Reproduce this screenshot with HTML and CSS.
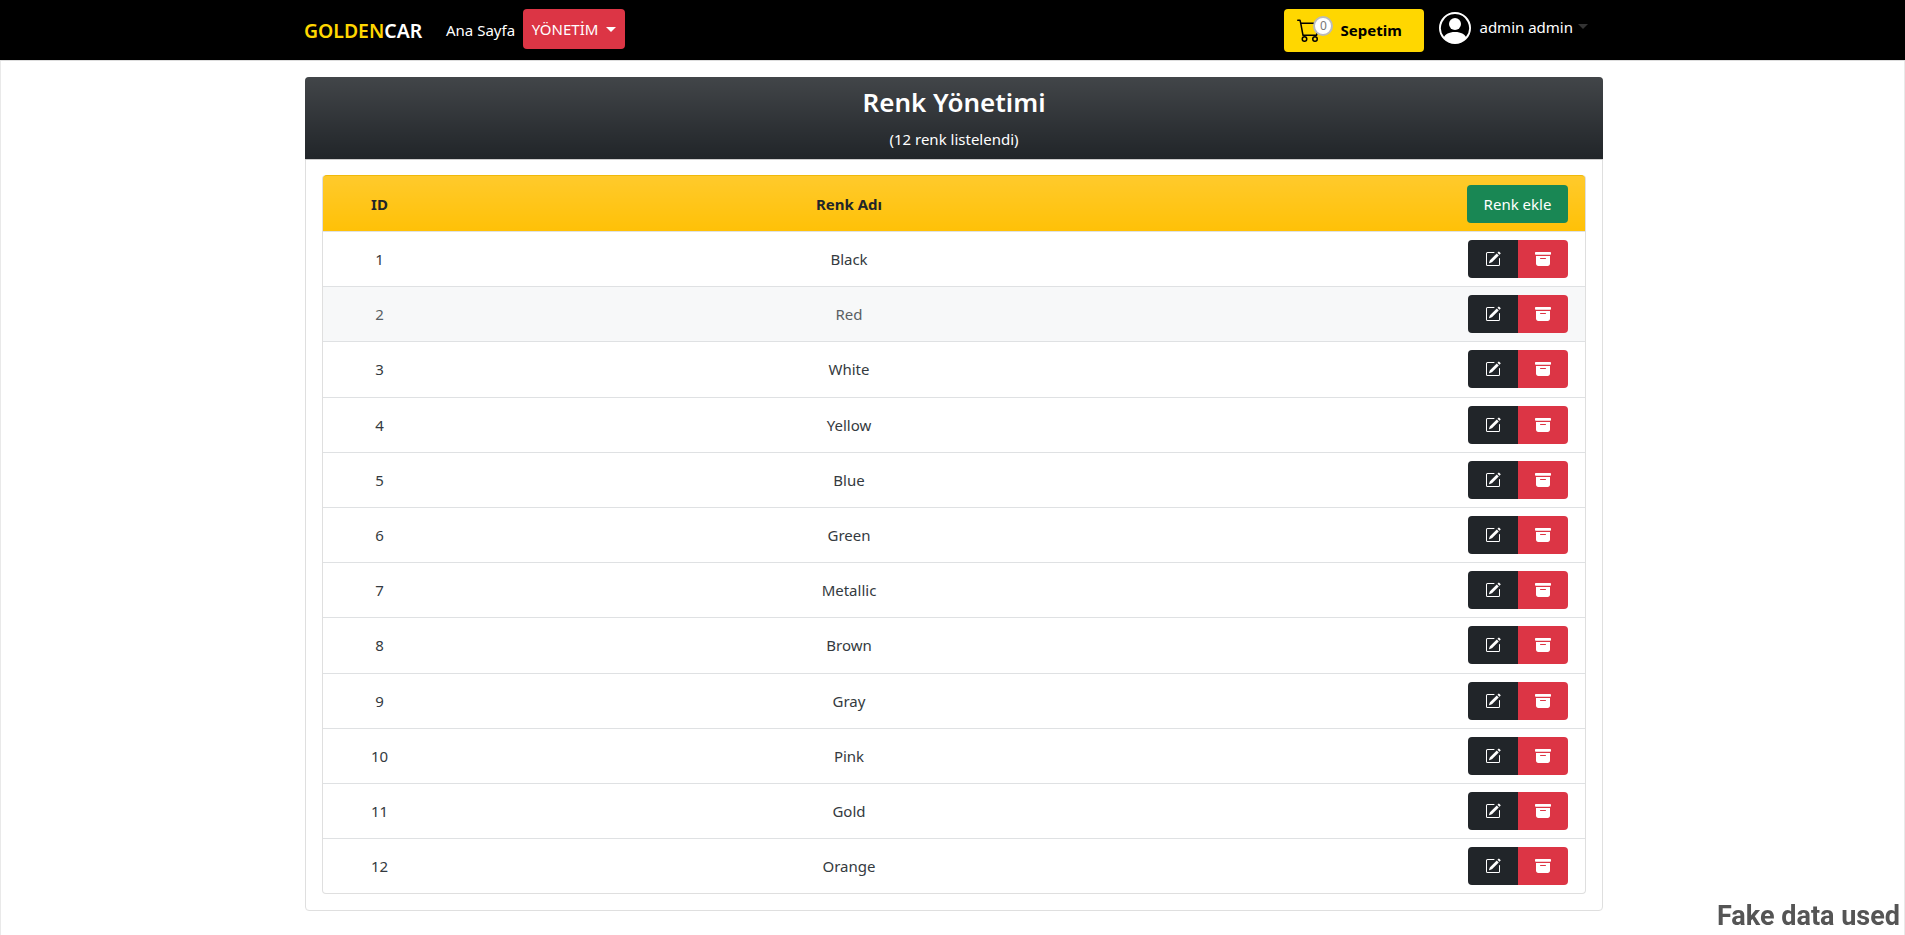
FILE: index.html
```html
<!DOCTYPE html>
<html lang="en">
<head>
  <meta charset="UTF-8" />
  <meta name="viewport" content="width=device-width, initial-scale=1.0" />
  <title>GoldenCar - Renk Yönetimi</title>
  <link rel="stylesheet" href="styles.css">
</head>
<body>
  <nav class="navbar">
    <div class="nav-left">
      <a class="brand"><span class="gold">GOLDEN</span>CAR</a>
      <a class="nav-link">Ana Sayfa</a>
      <button class="btn-admin">YÖNETİM<span class="caret caret-white"></span></button>
    </div>
    <div class="nav-right">
      <button class="btn-cart">
        <span class="cart-icon">
          <svg width="24" height="24" viewBox="0 0 16 16" fill="currentColor"><path d="M0 1.5A.5.5 0 0 1 .5 1H2a.5.5 0 0 1 .485.379L2.89 3H14.5a.5.5 0 0 1 .491.592l-1.5 8A.5.5 0 0 1 13 12H4a.5.5 0 0 1-.491-.408L2.01 3.607 1.61 2H.5a.5.5 0 0 1-.5-.5zM3.102 4l1.313 7h8.17l1.313-7H3.102zM5 12a2 2 0 1 0 0 4 2 2 0 0 0 0-4zm7 0a2 2 0 1 0 0 4 2 2 0 0 0 0-4zm-7 1a1 1 0 1 1 0 2 1 1 0 0 1 0-2zm7 0a1 1 0 1 1 0 2 1 1 0 0 1 0-2z"/></svg>
          <span class="cart-badge">0</span>
        </span>
        Sepetim
      </button>
      <div class="user-menu">
        <svg width="32" height="32" viewBox="0 0 16 16" fill="currentColor"><path d="M11 6a3 3 0 1 1-6 0 3 3 0 0 1 6 0z"/><path fill-rule="evenodd" d="M0 8a8 8 0 1 1 16 0A8 8 0 0 1 0 8zm8-7a7 7 0 0 0-5.468 11.37C3.242 11.226 4.805 10 8 10s4.757 1.225 5.468 2.37A7 7 0 0 0 8 1z"/></svg>
        <span class="user-name">admin admin</span>
        <span class="caret caret-dim"></span>
      </div>
    </div>
  </nav>

  <div class="container">
    <div class="card">
      <div class="card-header">
        <h3>Renk Yönetimi</h3>
        <div class="card-sub">(12 renk listelendi)</div>
      </div>
      <div class="card-body">
        <table class="color-table">
          <thead>
            <tr>
              <th class="col-id">ID</th>
              <th class="col-name">Renk Adı</th>
              <th class="col-actions"><button class="btn-add">Renk ekle</button></th>
            </tr>
          </thead>
          <tbody id="colorRows"></tbody>
        </table>
      </div>
    </div>
  </div>

  <div class="fake-note">Fake data used</div>

  <template id="rowTemplate">
    <tr>
      <td class="col-id"></td>
      <td class="col-name"></td>
      <td class="col-actions">
        <div class="btn-group">
          <button class="btn-edit"><svg width="16" height="16" viewBox="0 0 16 16" fill="currentColor"><path d="M15.502 1.94a.5.5 0 0 1 0 .706L14.459 3.69l-2-2L13.502.646a.5.5 0 0 1 .707 0l1.293 1.293zm-1.75 2.456-2-2L4.939 9.21a.5.5 0 0 0-.121.196l-.805 2.414a.25.25 0 0 0 .316.316l2.414-.805a.5.5 0 0 0 .196-.12l6.813-6.814z"/><path fill-rule="evenodd" d="M1 13.5A1.5 1.5 0 0 0 2.5 15h11a1.5 1.5 0 0 0 1.5-1.5v-6a.5.5 0 0 0-1 0v6a.5.5 0 0 1-.5.5h-11a.5.5 0 0 1-.5-.5v-11a.5.5 0 0 1 .5-.5H9a.5.5 0 0 0 0-1H2.5A1.5 1.5 0 0 0 1 2.5v11z"/></svg></button>
          <button class="btn-delete"><svg width="16" height="16" viewBox="0 0 16 16" fill="currentColor"><path d="M12.643 15C13.979 15 15 13.845 15 12.5V5H1v7.5C1 13.845 2.021 15 3.357 15h9.286zM5.5 7h5a.5.5 0 0 1 0 1h-5a.5.5 0 0 1 0-1zM.8 1a.8.8 0 0 0-.8.8V3a.8.8 0 0 0 .8.8h14.4A.8.8 0 0 0 16 3V1.8a.8.8 0 0 0-.8-.8H.8z"/></svg></button>
        </div>
      </td>
    </tr>
  </template>

  <script>
    const colors = ['Black', 'Red', 'White', 'Yellow', 'Blue', 'Green', 'Metallic', 'Brown', 'Gray', 'Pink', 'Gold', 'Orange'];
    const rows = document.getElementById('colorRows');
    const template = document.getElementById('rowTemplate');

    colors.forEach((name, i) => {
      const row = template.content.cloneNode(true);
      row.querySelector('.col-id').textContent = i + 1;
      row.querySelector('.col-name').textContent = name;
      // the second row is the one under the mouse in the screenshot
      if (i === 1) row.querySelector('tr').className = 'row-hover';
      rows.appendChild(row);
    });
  </script>
</body>
</html>
```

FILE: styles.css
```css
* {
  box-sizing: border-box;
}
body {
  display: flex;
  flex-direction: column;
  margin: 0;
  min-height: 100vh;
  background: #fff;
  font-family: "Noto Sans", "Open Sans", Arial, sans-serif;
  font-size: 15px;
  color: #212529;
}
button {
  font-family: inherit;
  cursor: pointer;
}
.navbar {
  display: flex;
  justify-content: space-between;
  align-items: center;
  flex-shrink: 0;
  height: 61px;
  padding: 0 317px 0 304px;
  background: #000;
  border-bottom: 1px solid #ddd;
  color: #fff;
}
.nav-left, .nav-right {
  display: flex;
  align-items: center;
}
.brand {
  width: 142px;
  font-size: 19.4px;
  font-weight: 600;
}
.gold {
  color: #ffd700;
}
.nav-link {
  width: 77px;
}
.btn-admin {
  display: flex;
  align-items: center;
  justify-content: center;
  width: 102px;
  height: 40px;
  margin-bottom: 2px;
  background: #dc3545;
  color: #fff;
  border: 0;
  border-radius: 4px;
  font-size: 15px;
}
.caret {
  display: inline-block;
  margin-left: 8px;
  border-top: 5px solid #fff;
  border-left: 5px solid transparent;
  border-right: 5px solid transparent;
}
.caret-dim {
  margin-left: 5px;
  margin-bottom: 3px;
  border-top-color: #333;
}
.btn-cart {
  display: flex;
  align-items: center;
  width: 140px;
  height: 43px;
  padding: 0 0 0 13px;
  background: #ffd700;
  color: #000;
  border: 0;
  border-radius: 4px;
  font-size: 15px;
  font-weight: 700;
}
.cart-icon {
  position: relative;
  display: flex;
  margin-right: 19px;
}
.cart-badge {
  position: absolute;
  top: -2px;
  left: 16px;
  width: 20px;
  height: 20px;
  background: #fff;
  border: 2px solid #bbb;
  border-radius: 50%;
  color: #777;
  font-size: 12px;
  font-weight: 400;
  line-height: 16px;
  text-align: center;
}
.user-menu {
  display: flex;
  align-items: center;
  margin-left: 15px;
  margin-bottom: 4px;
}
.user-name {
  margin-left: 8px;
  margin-bottom: 3px;
}
.container {
  flex: 1;
  padding: 16px 301px 25px 304px;
  border: 1px solid #e9e9e9;
  border-top: 0;
}
.card {
  border: 1px solid #dfdfdf;
  border-radius: 4px;
}
.card-header {
  height: 83px;
  padding-top: 5px;
  margin: -1px -1px 0;
  background: #212529 linear-gradient(180deg, rgba(255, 255, 255, 0.15), rgba(255, 255, 255, 0));
  border-radius: 4px 4px 0 0;
  border-bottom: 1px solid #ccc;
  color: #fff;
  text-align: center;
}
.card-header h3 {
  margin: 0;
  font-size: 26px;
  font-weight: 600;
  line-height: 40px;
}
.card-sub {
  margin-top: 7px;
}
.card-body {
  padding: 15px 16px 16px;
}
.color-table {
  width: 100%;
  border-collapse: separate;
  border-spacing: 0;
  border: 1px solid #dfdfdf;
  border-top: 0;
  border-radius: 4px;
  text-align: center;
}
.color-table th {
  height: 56px;
  background: #ffc107 linear-gradient(180deg, rgba(255, 255, 255, 0.15), rgba(255, 255, 255, 0));
  border-top: 1px solid #f0b90a;
  font-weight: 700;
}
.color-table th:first-child {
  border-top-left-radius: 4px;
}
.color-table th:last-child {
  border-top-right-radius: 4px;
}
.color-table td {
  height: 55.2px;
  border-top: 1px solid #dfe1e3;
  color: #343a40;
}
.color-table .row-hover td {
  background: #f7f8f9;
  color: #5a5f64;
}
.col-id {
  width: 113px;
}
.col-name {
  width: 826px;
}
.col-actions {
  padding-right: 17px;
  text-align: right;
}
.btn-add {
  width: 101px;
  height: 38px;
  background: #198754;
  color: #fff;
  border: 0;
  border-radius: 4px;
  font-size: 15px;
}
.btn-group {
  display: inline-flex;
  vertical-align: middle;
}
.btn-edit, .btn-delete {
  display: flex;
  align-items: center;
  justify-content: center;
  width: 50px;
  height: 38px;
  color: #fff;
  border: 0;
}
.btn-edit {
  background: #212529;
  border-radius: 4px 0 0 4px;
}
.btn-delete {
  background: #dc3545;
  border-radius: 0 4px 4px 0;
}
.fake-note {
  position: fixed;
  right: 5px;
  bottom: 3px;
  color: #555;
  font-family: Roboto, sans-serif;
  font-size: 27px;
  font-weight: 700;
}
```
